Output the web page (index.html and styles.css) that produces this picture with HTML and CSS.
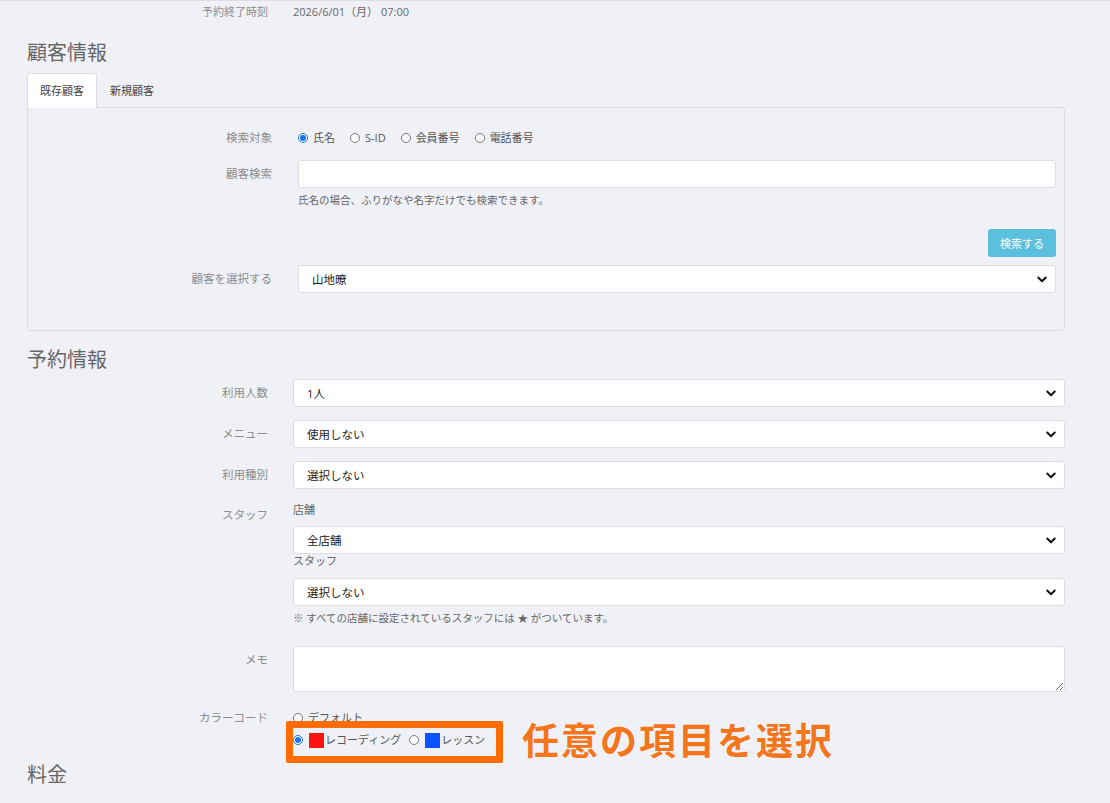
FILE: index.html
```html
<!DOCTYPE html>
<html lang="ja">
<head>
  <meta charset="UTF-8">
  <title>予約登録</title>
  <link rel="stylesheet" href="styles.css">
</head>
<body>
  <div class="page">

    <!-- 予約時刻 -->
    <div class="row row-top">
      <div class="label">予約終了時刻</div>
      <div class="value">2026/6/01（月） 07:00</div>
    </div>

    <!-- 顧客情報 -->
    <h2 class="section-title">顧客情報</h2>
    <div class="tabs">
      <span class="tab active">既存顧客</span>
      <span class="tab">新規顧客</span>
    </div>
    <div class="panel">
      <div class="prow prow-radio">
        <div class="label">検索対象</div>
        <div class="radios">
          <label class="radio"><input type="radio" name="target" checked> 氏名</label>
          <label class="radio"><input type="radio" name="target"> S-ID</label>
          <label class="radio"><input type="radio" name="target"> 会員番号</label>
          <label class="radio"><input type="radio" name="target"> 電話番号</label>
        </div>
      </div>
      <div class="prow prow-search">
        <div class="label">顧客検索</div>
        <div>
          <input type="text" class="field">
          <p class="help">氏名の場合、ふりがなや名字だけでも検索できます。</p>
        </div>
      </div>
      <div class="panel-actions">
        <button class="btn-search">検索する</button>
      </div>
      <div class="prow prow-select">
        <div class="label">顧客を選択する</div>
        <select class="field"><option>山地暸</option></select>
      </div>
    </div>

    <!-- 予約情報 -->
    <h2 class="section-title title-reserve">予約情報</h2>
    <div class="row">
      <div class="label">利用人数</div>
      <select class="field"><option>1人</option></select>
    </div>
    <div class="row gap">
      <div class="label">メニュー</div>
      <select class="field"><option>使用しない</option></select>
    </div>
    <div class="row gap">
      <div class="label">利用種別</div>
      <select class="field"><option>選択しない</option></select>
    </div>
    <div class="row row-staff">
      <div class="label label-staff">スタッフ</div>
      <div>
        <div class="sub sub-shop">店舗</div>
        <select class="field sel-shop"><option>全店舗</option></select>
        <div class="sub sub-staff">スタッフ</div>
        <select class="field sel-staff"><option>選択しない</option></select>
        <p class="note">※ すべての店舗に設定されているスタッフには ★ がついています。</p>
      </div>
    </div>
    <div class="row row-memo">
      <div class="label">メモ</div>
      <textarea class="field memo"></textarea>
    </div>
    <div class="row row-color">
      <div class="label label-color">カラーコード</div>
      <div class="colors">
        <div class="color-line">
          <label class="radio"><input type="radio" name="color"> デフォルト</label>
        </div>
        <div class="color-line line-pick">
          <label class="radio"><input type="radio" name="color" checked><span class="swatch red"></span>レコーディング</label>
          <label class="radio"><input type="radio" name="color"><span class="swatch blue"></span>レッスン</label>
          <span class="mark-box"></span>
          <span class="mark-text">任意の項目を選択</span>
        </div>
      </div>
    </div>

    <!-- 料金 -->
    <h2 class="section-title title-price">料金</h2>
    <div class="row row-price">
      <div class="label">料金種別</div>
      <div></div>
    </div>

  </div>
</body>
</html>
```

FILE: styles.css
```css
* { box-sizing: border-box; }

html, body {
  margin: 0;
  height: 100%;
  overflow: hidden;
}

body {
  background: #f0f1f6;
  font-family: "Open Sans", "Noto Sans CJK JP", sans-serif;
  font-size: 11.5px;
  color: #333;
}

.page {
  border-top: 1px solid #dedfe4;
  padding: 0 45px 0 27px;
}

.label {
  color: #8c8c8c;
  text-align: right;
  line-height: 28px;
}

/* rows outside panel */
.row {
  display: grid;
  grid-template-columns: 241px 1fr;
  column-gap: 25px;
}
.row.gap { margin-top: 13px; }

.row-top { height: 22px; }
.row-top .label,
.row-top .value { line-height: 22px; font-size: 11px; }
.row-top .value { color: #666; }

.section-title {
  margin: 16px 0 6px;
  font-size: 20px;
  font-weight: normal;
  line-height: 28px;
  color: #666;
}
.title-reserve { margin: 15px 0 5px; }
.title-price { margin: 10px 0 7px; }

/* tabs */
.tabs {
  display: flex;
  position: relative;
  margin-bottom: -1px;
}
.tab {
  height: 35px;
  line-height: 33px;
  padding: 0 12px;
  border: 1px solid transparent;
  border-bottom: 0;
  border-radius: 3px 3px 0 0;
  font-size: 11px;
  color: #444;
}
.tab.active {
  background: #fff;
  border-color: #dcdde2;
}

/* panel */
.panel {
  border: 1px solid #dcdde2;
  border-radius: 3px;
  padding: 20px 8px 37px 0;
}
.prow {
  display: grid;
  grid-template-columns: 244px 1fr;
  column-gap: 26px;
}
.prow-radio .label { line-height: 20px; }
.prow-search { margin-top: 12px; }
.prow-select { margin-top: 8px; }

.radios {
  display: flex;
  align-items: center;
  gap: 15px;
  padding-left: 0;
}
.radio {
  display: inline-flex;
  align-items: center;
  gap: 5px;
  font-size: 11px;
  color: #555;
  line-height: 20px;
}
.radio input {
  width: 10px;
  height: 10px;
  margin: 0;
  accent-color: #1a73e8;
}

.field {
  display: block;
  width: 100%;
  height: 28px;
  border: 1px solid #dcdde2;
  border-radius: 3px;
  background: #fff;
  font-family: inherit;
  font-size: 11.5px;
  color: #222;
  padding: 0 13px;
}
select.field {
  appearance: none;
  -webkit-appearance: none;
  background: #fff url("data:image/svg+xml,%3Csvg xmlns='http://www.w3.org/2000/svg' viewBox='0 0 16 16'%3E%3Cpath fill='none' stroke='%23111' stroke-linecap='round' stroke-linejoin='round' stroke-width='2.6' d='M3 6l5 5 5-5'/%3E%3C/svg%3E") no-repeat right 7px center / 12px 12px;
}

.help {
  margin: 4px 0 0;
  line-height: 16px;
  font-size: 10.5px;
  color: #666;
}

.panel-actions {
  display: flex;
  justify-content: flex-end;
  margin-top: 21px;
}
.btn-search {
  height: 28px;
  width: 68px;
  border: 0;
  border-radius: 3px;
  background: #5bc0de;
  color: #fff;
  font-family: inherit;
  font-size: 11px;
}

/* staff */
.row-staff { margin-top: 11px; }
.label-staff { line-height: 20px; padding-top: 5px; }
.sub {
  font-size: 11px;
  color: #666;
}
.sub-shop { line-height: 20px; }
.sel-shop { margin-top: 6px; }
.sub-staff { line-height: 14px; }
.sel-staff { margin-top: 10px; }
.note {
  margin: 5px 0 0;
  line-height: 14px;
  font-size: 10.5px;
  color: #666;
}

.row-memo { margin-top: 21px; }
.memo {
  height: 46px;
  resize: vertical;
}

/* color code */
.row-color { margin-top: 15px; }
.label-color { line-height: 22px; }
.color-line {
  display: flex;
  align-items: center;
  height: 22px;
  gap: 8px;
}
.line-pick { position: relative; }
.line-pick .radio { gap: 0; }
.line-pick .radio input { margin-right: 6px; }
.swatch {
  width: 15px;
  height: 15px;
  margin-right: 1px;
}
.swatch.red { background: #ff1212; }
.swatch.blue { background: #0a55ff; }

.mark-box {
  position: absolute;
  left: -7px;
  top: -8px;
  width: 217px;
  height: 42px;
  border: 7px solid #ff6c00;
  border-radius: 2px;
}
.mark-text {
  position: absolute;
  left: 229px;
  top: -7px;
  font-size: 37px;
  letter-spacing: 2px;
  line-height: 1;
  font-weight: bold;
  color: #f5751c;
  white-space: nowrap;
}
```
